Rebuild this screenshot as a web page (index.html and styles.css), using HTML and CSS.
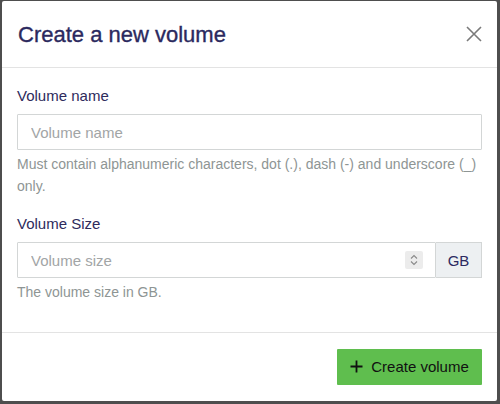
FILE: index.html
```html
<!DOCTYPE html>
<html lang="en">
<head>
<meta charset="utf-8">
<title>Create a new volume</title>
<link rel="stylesheet" href="styles.css">
</head>
<body>
<div class="modal">
  <header class="modal-header">
    <h1 class="modal-title">Create a new volume</h1>
    <button class="close" aria-label="Close">
      <svg width="16" height="16" viewBox="0 0 16 16"><path d="M1 1L15 15M15 1L1 15" stroke="#7a7a7a" stroke-width="1.6" fill="none"/></svg>
    </button>
  </header>
  <section class="modal-body">
    <div class="field">
      <label class="label" for="vname">Volume name</label>
      <input class="input" id="vname" type="text" placeholder="Volume name">
      <p class="help">Must contain alphanumeric characters, dot (.), dash (-) and underscore (_) only.</p>
    </div>
    <div class="field">
      <label class="label" for="vsize">Volume Size</label>
      <div class="addons">
        <div class="input number">
          <input id="vsize" type="text" placeholder="Volume size">
          <span class="spinner">
            <svg width="18" height="18" viewBox="0 0 18 18"><path d="M6 7.5L9 4.5L12 7.5M6 10.5L9 13.5L12 10.5" stroke="#8a8a8a" stroke-width="1.1" fill="none"/></svg>
          </span>
        </div>
        <span class="addon">GB</span>
      </div>
      <p class="help">The volume size in GB.</p>
    </div>
  </section>
  <footer class="modal-footer">
    <button class="btn-create">
      <svg width="13" height="13" viewBox="0 0 13 13"><path d="M6.5 0.5V12.5M0.5 6.5H12.5" stroke="#111" stroke-width="1.8" fill="none"/></svg>
      <span>Create volume</span>
    </button>
  </footer>
</div>
</body>
</html>
```
FILE: styles.css
```css
* { box-sizing: border-box; }
html, body { margin: 0; padding: 0; }
body {
  background: #4e4e4e;
  font-family: "Liberation Sans", Arial, Helvetica, sans-serif;
  width: 500px;
  height: 404px;
  overflow: hidden;
}
.modal {
  margin: 1px 3px 0 2px;
  height: 400px;
  background: #fff;
  border-radius: 2px;
  display: flex;
  flex-direction: column;
}
.modal-header {
  height: 67px;
  border-bottom: 1px solid #e3e3e3;
  display: flex;
  align-items: center;
  justify-content: space-between;
  padding: 0 15px 0 16px;
}
.modal-title {
  margin: 0;
  font-size: 22px;
  font-weight: 400;
  color: #2b295e;
  -webkit-text-stroke: 0.35px #2b295e;
  padding-top: 1px;
}
.close {
  border: 0;
  background: none;
  padding: 0;
  width: 16px;
  height: 16px;
  display: flex;
}
.modal-body {
  padding: 18px 15px 0 15px;
  flex: 1;
  border-bottom: 1px solid #e3e3e3;
}
.field { margin-bottom: 17px; }
.label {
  display: block;
  font-size: 15px;
  line-height: 20px;
  color: #2e2b5c;
  margin-bottom: 8px;
}
.input {
  display: block;
  width: 100%;
  height: 36px;
  border: 1px solid #d3d6d6;
  border-radius: 1px;
  padding: 0 13px;
  font-family: inherit;
  font-size: 15px;
  color: #333;
  background: #fff;
  outline: none;
}
.input::placeholder, .number input::placeholder { color: #a2a5a6; }
.help {
  margin: 3px 0 0;
  font-size: 14px;
  line-height: 22px;
  color: #8e9594;
}
.addons { display: flex; }
.number {
  flex: 1;
  display: flex;
  align-items: center;
  padding: 0 12px 0 13px;
}
.number input {
  flex: 1;
  border: 0;
  outline: none;
  font-family: inherit;
  font-size: 15px;
  padding: 0;
  min-width: 0;
  background: transparent;
}
.spinner {
  width: 18px;
  height: 18px;
  background: #ececec;
  border-radius: 2px;
  display: flex;
}
.addon {
  width: 46px;
  height: 36px;
  border: 1px solid #d3d6d6;
  border-left: 0;
  background: #edf0f2;
  color: #2c2960;
  font-size: 15px;
  display: flex;
  align-items: center;
  justify-content: center;
}
.modal-footer {
  height: 68px;
  display: flex;
  align-items: center;
  justify-content: flex-end;
  padding: 0 15px 1px;
}
.btn-create {
  height: 36px;
  width: 145px;
  border: 0;
  border-radius: 1px;
  background: #5fbe4e;
  color: #111;
  font-family: inherit;
  font-size: 15px;
  display: flex;
  align-items: center;
  justify-content: center;
  gap: 8px;
  padding: 0;
}
```
